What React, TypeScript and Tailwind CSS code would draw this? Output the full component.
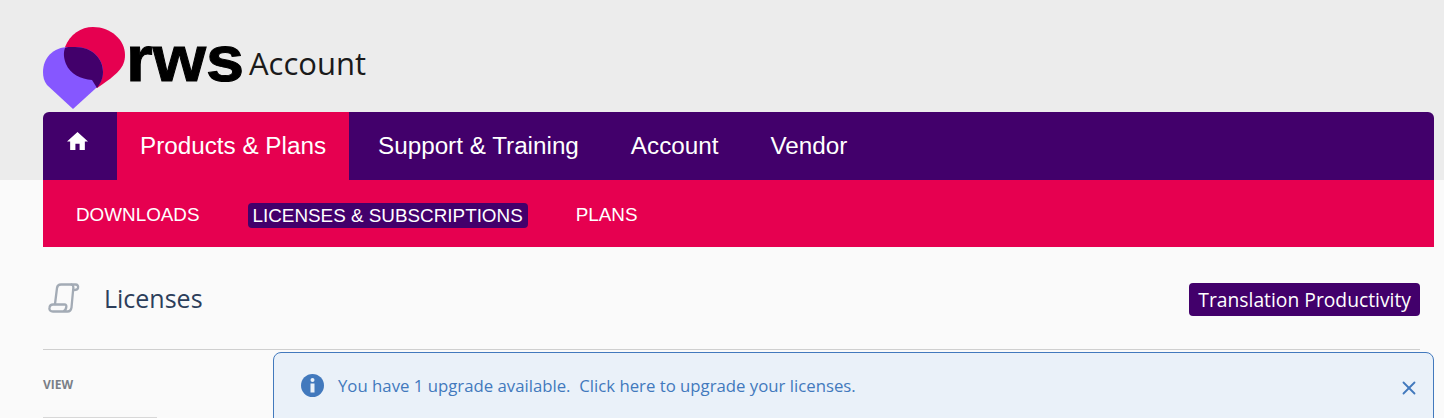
import { X } from "lucide-react";

const PRIMARY_NAV = ["Support & Training", "Account", "Vendor"];

function LogoMark() {
  return (
    <svg width="83" height="82" viewBox="0 0 83 82" className="shrink-0">
      <path d="M22 20C27 7 38 0 50 0C68 0 82 13 82 28C82 40 75 47 54 61L30 50Z" fill="#e60050" />
      <path d="M0 45C0 31 10 20 26 20H32C50 20 60 32 60 45C60 52 56 58 52 62L30 82L4 58C1 54 0 50 0 45Z" fill="#8657ff" />
      <path d="M22 21C24 20 25 20 26 20H32C50 20 60 32 60 45C60 52 57 57 54 61L49 53C38 52 27 47 23 37C21 32 20 26 22 21Z" fill="#42006b" />
    </svg>
  );
}

function HomeIcon() {
  return (
    <svg width="21" height="18" viewBox="2 3 20 17" fill="white">
      <path d="M10 20v-6h4v6h5v-8h3L12 3 2 12h3v8z" />
    </svg>
  );
}

function ScrollIcon() {
  return (
    <svg width="32" height="32" viewBox="0 0 32 32" fill="none" stroke="#a3abb5" strokeWidth="2.300" strokeLinecap="round" strokeLinejoin="round">
      <path d="M7 22L9 6C9.300 3.500 10.500 2.500 13 2.500H27.500C29.500 2.500 30.500 4 30 6C29.700 7.500 28.500 8 26 8" />
      <path d="M23.500 2.500C25 3 25.500 4.500 25.300 6L23.500 25.500C23 28.500 21.500 29.500 19.500 29.500H5C2.500 29.500 1 28 1.500 25.500C1.800 23.500 3 22.500 5 22.500H16.500C18 22.500 18.500 23.500 18.300 25C18 27.500 17 29 15 29.500" />
    </svg>
  );
}

function InfoIcon() {
  return (
    <svg width="23" height="23" viewBox="0 0 23 23" className="shrink-0">
      <circle cx="11.500" cy="11.500" r="11.500" fill="#4279bd" />
      <circle cx="11.500" cy="6" r="2" fill="#eaf1f9" />
      <rect x="9.500" y="9.500" width="4" height="9" fill="#eaf1f9" />
    </svg>
  );
}

export default function App() {
  return (
    <div className="relative h-[418px] w-[1444px] overflow-hidden bg-[#fafafa] font-['Liberation_Sans',sans-serif]">
      <div className="h-[180px] bg-[#ececec] pl-[43px] pr-[10px]">
        <div className="flex h-[112px] items-start pt-[27px]">
          <LogoMark />
          <span className="mt-[2px] w-[118px] origin-left scale-x-[1.07] text-[64px] leading-[60px] font-bold text-black [-webkit-text-stroke:1px_black]">rws</span>
          <span className="mt-[19px] ml-[5px] font-['Open_Sans',sans-serif] text-[31px] leading-[34px] text-[#1a1a1a]">Account</span>
        </div>
        <nav className="flex h-[68px] items-stretch rounded-t-[6px] bg-[#42006b] text-[24.250px] text-white">
          <a className="w-[74px] rounded-tl-[6px] pt-[20px] pl-[24px]">
            <HomeIcon />
          </a>
          <a className="w-[232px] bg-[#e60050] pt-[20px] pl-[23px] leading-[28px]">Products &amp; Plans</a>
          <div className="flex gap-[52px] pt-[20px] pl-[29px] leading-[28px]">
            {PRIMARY_NAV.map((item) => (
              <a key={item}>{item}</a>
            ))}
          </div>
        </nav>
      </div>

      <div className="ml-[43px] mr-[10px] flex h-[67px] items-center bg-[#e60050] pt-[3px] pl-[28px] text-[18.850px] text-white">
        <a className="px-[5px]">DOWNLOADS</a>
        <a className="ml-[43px] rounded-[4px] bg-[#42006b] px-[5px] leading-[25px]">LICENSES &amp; SUBSCRIPTIONS</a>
        <a className="ml-[43px] px-[5px]">PLANS</a>
      </div>

      <div className="mx-[24px] ml-[43px] font-['Open_Sans',sans-serif]">
        <div className="flex h-[103px] items-center justify-between border-b border-[#cfcfcf] pb-[1px]">
          <div className="flex items-center">
            <span className="ml-[5px]"><ScrollIcon /></span>
            <h1 className="ml-[24px] text-[25px] leading-[32px] text-[#2c3e5a]">Licenses</h1>
          </div>
          <span className="mt-[3px] rounded-[4px] bg-[#42006b] px-[9px] text-[19.300px] leading-[33px] text-white">Translation Productivity</span>
        </div>
        <div className="pt-[27px] text-[12px] leading-[15px] font-bold text-[#7a7f87]">VIEW</div>
        <div className="mt-[25px] h-px w-[114px] bg-[#d8d8d8]" />
      </div>

      <div className="absolute top-[352px] left-[273px] flex h-[80px] w-[1161px] items-start rounded-[8px] border border-[#4279bd] bg-[#eaf1f9] pt-[21px] pr-[13px] pl-[27px] font-['Open_Sans',sans-serif] text-[16.750px] text-[#4279bd]">
        <InfoIcon />
        <p className="ml-[14px] leading-[23px]">You have 1 upgrade available.&nbsp; Click here to upgrade your licenses.</p>
        <X size={22} strokeWidth={2} className="mt-[3px] ml-auto" />
      </div>
    </div>
  );
}
